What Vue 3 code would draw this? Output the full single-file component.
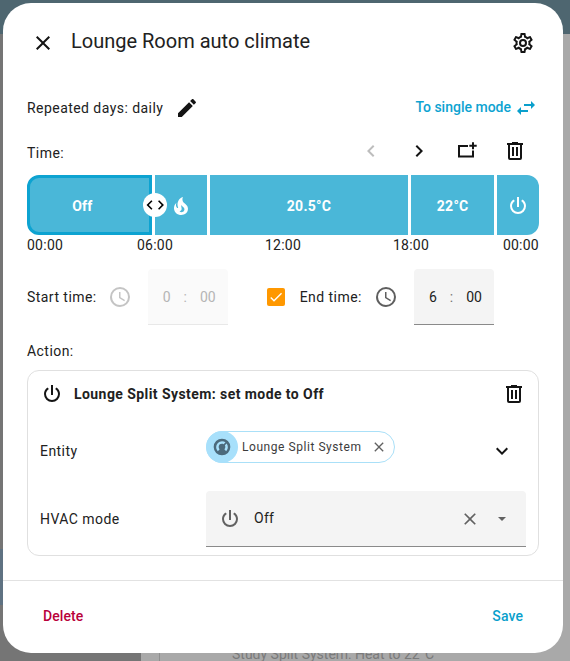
<script setup>
const P = {
  close: 'M19,6.41L17.59,5L12,10.59L6.41,5L5,6.41L10.59,12L5,17.59L6.41,19L12,13.41L17.59,19L19,17.59L13.41,12L19,6.41Z',
  pencil: 'M20.71,7.04C21.1,6.65 21.1,6 20.71,5.63L18.37,3.29C18,2.9 17.35,2.9 16.96,3.29L15.12,5.12L18.87,8.87M3,17.25V21H6.75L17.81,9.93L14.06,6.18L3,17.25Z',
  cog: 'M12,8A4,4 0 0,1 16,12A4,4 0 0,1 12,16A4,4 0 0,1 8,12A4,4 0 0,1 12,8M12,10A2,2 0 0,0 10,12A2,2 0 0,0 12,14A2,2 0 0,0 14,12A2,2 0 0,0 12,10M10,22C9.75,22 9.54,21.82 9.5,21.58L9.13,18.93C8.5,18.68 7.96,18.34 7.44,17.94L4.95,18.95C4.73,19.03 4.46,18.95 4.34,18.73L2.34,15.27C2.21,15.05 2.27,14.78 2.46,14.63L4.57,12.97L4.5,12L4.57,11L2.46,9.37C2.27,9.22 2.21,8.95 2.34,8.73L4.34,5.27C4.46,5.05 4.73,4.96 4.95,5.05L7.44,6.05C7.96,5.66 8.5,5.32 9.13,5.07L9.5,2.42C9.54,2.18 9.75,2 10,2H14C14.25,2 14.46,2.18 14.5,2.42L14.87,5.07C15.5,5.32 16.04,5.66 16.56,6.05L19.05,5.05C19.27,4.96 19.54,5.05 19.66,5.27L21.66,8.73C21.79,8.95 21.73,9.22 21.54,9.37L19.43,11L19.5,12L19.43,13L21.54,14.63C21.73,14.78 21.79,15.05 21.66,15.27L19.66,18.73C19.54,18.95 19.27,19.04 19.05,18.95L16.56,17.95C16.04,18.34 15.5,18.68 14.87,18.93L14.5,21.58C14.46,21.82 14.25,22 14,22H10M11.25,4L10.88,6.61C9.68,6.86 8.62,7.5 7.85,8.39L5.44,7.35L4.69,8.65L6.8,10.2C6.4,11.37 6.4,12.64 6.8,13.8L4.68,15.36L5.43,16.66L7.86,15.62C8.63,16.5 9.68,17.14 10.87,17.38L11.24,20H12.76L13.13,17.39C14.32,17.14 15.37,16.5 16.14,15.62L18.57,16.66L19.32,15.36L17.2,13.81C17.6,12.64 17.6,11.37 17.2,10.2L19.31,8.65L18.56,7.35L16.15,8.39C15.38,7.5 14.32,6.86 13.12,6.62L12.75,4H11.25Z',
  swap: 'M21,9L17,5V8H10V10H17V13M7,11L3,15L7,19V16H14V14H7V11Z',
  left: 'M15.41,16.58L10.83,12L15.41,7.41L14,6L8,12L14,18L15.41,16.58Z',
  right: 'M8.59,16.58L13.17,12L8.59,7.41L10,6L16,12L10,18L8.59,16.58Z',
  down: 'M7.41,8.58L12,13.17L16.59,8.58L18,10L12,16L6,10L7.41,8.58Z',
  trash: 'M9,3V4H4V6H5V19A2,2 0 0,0 7,21H17A2,2 0 0,0 19,19V6H20V4H15V3H9M7,6H17V19H7V6M9,8V17H11V8H9M13,8V17H15V8H13Z',
  power: 'M16.56,5.44L15.11,6.89C16.84,7.94 18,9.83 18,12A6,6 0 0,1 12,18A6,6 0 0,1 6,12C6,9.83 7.16,7.94 8.88,6.88L7.44,5.44C5.36,6.88 4,9.28 4,12A8,8 0 0,0 12,20A8,8 0 0,0 20,12C20,9.28 18.64,6.88 16.56,5.44M13,3H11V13H13',
  clock: 'M12,20A8,8 0 0,0 20,12A8,8 0 0,0 12,4A8,8 0 0,0 4,12A8,8 0 0,0 12,20M12,2A10,10 0 0,1 22,12A10,10 0 0,1 12,22C6.47,22 2,17.5 2,12A10,10 0 0,1 12,2M12.5,7V12.25L17,14.92L16.25,16.15L11,13V7H12.5Z',
  fire: 'M17.66 11.2C17.43 10.9 17.15 10.64 16.89 10.38C16.22 9.78 15.46 9.35 14.82 8.72C13.33 7.26 13 4.85 13.95 3C13 3.23 12.17 3.75 11.46 4.32C8.87 6.4 7.85 10.07 9.07 13.22C9.11 13.32 9.15 13.42 9.15 13.55C9.15 13.77 9 13.97 8.8 14.05C8.57 14.15 8.33 14.09 8.14 13.93C8.08 13.88 8.04 13.83 8 13.76C6.87 12.33 6.69 10.28 7.45 8.64C5.78 10 4.87 12.3 5 14.47C5.06 14.97 5.12 15.47 5.29 15.97C5.43 16.57 5.7 17.17 6 17.7C7.08 19.43 8.95 20.67 10.96 20.92C13.1 21.19 15.39 20.8 17.03 19.32C18.86 17.66 19.5 15 18.56 12.72L18.43 12.46C18.22 12 17.66 11.2 17.66 11.2M14.5 17.5C14.22 17.74 13.76 18 13.4 18.1C12.28 18.5 11.16 17.94 10.5 17.28C11.69 17 12.4 16.12 12.61 15.23C12.78 14.43 12.46 13.77 12.33 13C12.21 12.26 12.23 11.63 12.5 10.94C12.69 11.32 12.89 11.7 13.13 12C13.9 13 15.11 13.44 15.37 14.8C15.41 14.94 15.43 15.08 15.43 15.23C15.46 16.05 15.1 16.95 14.5 17.5H14.5Z',
  addbox: 'M3,6H13V8H5V16.5H17V11.5H19V18.5H3V6ZM17,3.2H19V5.7H21.7V7.7H19V10.2H17V7.7H14.3V5.7H17V3.2Z',
  thermostat: 'M16.95,16.95L14.83,14.83C15.55,14.1 16,13.1 16,12C16,11.26 15.79,10.57 15.43,10L17.6,7.81C18.5,9 19,10.43 19,12C19,13.93 18.22,15.68 16.95,16.95M12,5C13.57,5 15,5.5 16.19,6.4L14,8.56C13.43,8.21 12.74,8 12,8A4,4 0 0,0 8,12C8,13.1 8.45,14.1 9.17,14.83L7.05,16.95C5.78,15.68 5,13.93 5,12A7,7 0 0,1 12,5M12,2A10,10 0 0,0 2,12A10,10 0 0,0 12,22A10,10 0 0,0 22,12A10,10 0 0,0 12,2Z',
  check: 'M9,16.17L4.83,12L3.41,13.41L9,19L21,7L19.59,5.59L9,16.17Z',
}
const segments = [
  { key: 'off', w: 125, text: 'Off', cls: 'active first' },
  { key: 'fire', w: 52, icon: 'fire' },
  { key: 't1', w: 199, text: '20.5°C' },
  { key: 't2', w: 83, text: '22°C' },
  { key: 'pw', w: 42, icon: 'power', cls: 'last' },
]
const ticks = ['00:00', '06:00', '12:00', '18:00', '00:00']
</script>

<template>
  <div class="page">
    <div class="backdrop">
      <div class="back-top"></div>
      <div class="back-left"></div>
      <div class="back-blue"></div>
      <div class="back-line"></div>
      <div class="back-bottom"><span>Study Split System: Heat to 22°C</span></div>
    </div>
    <div class="dialog">
      <header class="head">
        <svg class="ic close" viewBox="0 0 24 24"><path :d="P.close" /></svg>
        <h1>Lounge Room auto climate</h1>
        <svg class="ic cog" viewBox="0 0 24 24"><path :d="P.cog" /></svg>
      </header>

      <div class="repeat">
        <span class="label">Repeated days: daily</span>
        <svg class="ic pencil" viewBox="0 0 24 24"><path :d="P.pencil" /></svg>
        <a class="mode">To single mode</a>
        <svg class="ic swap" viewBox="0 0 24 24"><path :d="P.swap" /></svg>
      </div>

      <div class="timerow">
        <span class="label time-l">Time:</span>
        <div class="tools">
          <svg class="ic faint" viewBox="0 0 24 24"><path :d="P.left" /></svg>
          <svg class="ic" viewBox="0 0 24 24"><path :d="P.right" /></svg>
          <svg class="ic" viewBox="0 0 24 24"><path :d="P.addbox" /></svg>
          <svg class="ic" viewBox="0 0 24 24"><path :d="P.trash" /></svg>
        </div>
      </div>

      <div class="bar">
        <div v-for="s in segments" :key="s.key" class="seg" :class="s.cls" :style="{ width: s.w + 'px' }">
          <template v-if="s.text">{{ s.text }}</template>
          <svg v-else class="ic seg-ic" viewBox="0 0 24 24"><path :d="P[s.icon]" /></svg>
        </div>
        <div class="handle">
          <svg viewBox="0 0 24 24">
            <path :d="P.left" transform="translate(6.5 12) scale(.8) translate(-11.7 -12)" />
            <path :d="P.right" transform="translate(18 12) scale(.8) translate(-12.3 -12)" />
          </svg>
        </div>
      </div>
      <div class="ticks"><span v-for="(t, i) in ticks" :key="i">{{ t }}</span></div>

      <div class="times">
        <span class="label">Start time:</span>
        <svg class="ic clk dim" viewBox="0 0 24 24"><path :d="P.clock" /></svg>
        <div class="timebox off"><span>0</span><i>:</i><span>00</span></div>
        <div class="chk"><svg viewBox="0 0 24 24"><path :d="P.check" /></svg></div>
        <span class="label end-l">End time:</span>
        <svg class="ic clk" viewBox="0 0 24 24"><path :d="P.clock" /></svg>
        <div class="timebox"><span>6</span><i>:</i><span>00</span></div>
      </div>

      <div class="label action-l">Action:</div>
      <section class="card">
        <div class="card-head">
          <svg class="ic" viewBox="0 0 24 24"><path :d="P.power" /></svg>
          <strong>Lounge Split System: set mode to Off</strong>
          <svg class="ic" viewBox="0 0 24 24"><path :d="P.trash" /></svg>
        </div>
        <div class="entity">
          <span class="field-l">Entity</span>
          <div class="chip">
            <span class="chip-ic"><svg viewBox="0 0 24 24"><path :d="P.thermostat" fill-rule="evenodd" /></svg></span>
            <span class="chip-t">Lounge Split System</span>
            <svg class="chip-x" viewBox="0 0 24 24"><path :d="P.close" /></svg>
          </div>
          <svg class="ic ent-down" viewBox="0 0 24 24"><path :d="P.down" /></svg>
        </div>
        <div class="hvac">
          <span class="field-l">HVAC mode</span>
          <div class="select">
            <svg class="ic grey" viewBox="0 0 24 24"><path :d="P.power" /></svg>
            <span class="sel-t">Off</span>
            <svg class="ic grey sel-x" viewBox="0 0 24 24"><path :d="P.close" /></svg>
            <span class="caret"></span>
          </div>
        </div>
      </section>

      <footer class="foot">
        <a class="del">Delete</a>
        <a class="save">Save</a>
      </footer>
    </div>
  </div>
</template>

<style>
html, body { margin: 0; background: #a9a9a9; }
</style>

<style scoped>
.page { position: relative; width: 570px; height: 661px; overflow: hidden; font-family: Roboto, "Liberation Sans", sans-serif; color: #212121; }
.backdrop { position: absolute; inset: 0; background: #a9a9a9; }
.back-top { position: absolute; left: 0; right: 0; top: 0; height: 34px; background: #4e6670; }
.back-left { position: absolute; left: 0; top: 34px; bottom: 0; width: 141px; background: #757575; }
.back-blue { position: absolute; left: 0; top: 549px; height: 56px; width: 141px; background: #5f7282; }
.back-line { position: absolute; left: 159px; top: 640px; bottom: 0; width: 1px; background: #8f8f8f; }
.back-bottom { position: absolute; left: 232px; top: 646px; font-size: 14px; color: #7a7a7a; }
.dialog { position: absolute; left: 3px; top: 3px; width: 560px; height: 650px; box-sizing: border-box; padding: 0 24px; background: #fff; border-radius: 28px; display: flex; flex-direction: column; }
.ic { width: 24px; height: 24px; fill: #141414; flex: none; display: block; }
.head { display: flex; align-items: center; height: 80px; margin: 0 4px; }
.close { margin-right: 16px; }
.head h1 { margin: 0; flex: 1; font-size: 20px; font-weight: 400; color: #212121; position: relative; top: -2px; }
.label { font-size: 14px; color: #212121; letter-spacing: 0.45px; }
.repeat { display: flex; align-items: center; height: 24px; margin-top: 13px; }
.pencil { margin-left: 12px; }
.mode { margin-left: auto; font-size: 14px; font-weight: 500; color: #0da3d1; margin-right: 3px; position: relative; top: -1px; }
.swap { fill: #0a9fcc; margin-right: 1px; }
.timerow { display: flex; align-items: center; justify-content: space-between; height: 24px; margin-top: 19px; }
.time-l { padding-top: 4px; }
.tools { display: flex; gap: 24px; margin-right: 12px; }
.tools .faint { fill: #bdbdbd; }
.bar { position: relative; display: flex; gap: 3px; height: 60px; margin-top: 12px; }
.seg { background: #4ab7d8; color: #fff; font-size: 14px; font-weight: 700; letter-spacing: 0.25px; display: flex; align-items: center; justify-content: center; box-sizing: border-box; padding-top: 1px; }
.seg.first { border-radius: 12px 0 0 12px; padding-right: 14px; }
.seg.last { border-radius: 0 12px 12px 0; }
.seg.active { border: 3px solid #0da3d1; }
.seg-ic { fill: #fff; }
.handle { position: absolute; left: 116px; top: 18px; width: 24px; height: 24px; background: #fff; border-radius: 50%; z-index: 2; }
.handle svg { display: block; width: 24px; height: 24px; fill: #000; }
.ticks { display: grid; grid-template-columns: 64px 128px 128px 128px 64px; justify-items: center; font-size: 14px; letter-spacing: 0.25px; line-height: 16px; margin-top: 2px; }
.ticks span:first-child { justify-self: start; }
.ticks span:last-child { justify-self: end; }
.times { display: flex; align-items: center; height: 56px; margin-top: 16px; }
.clk { margin-left: 12px; fill: #5f5f5f; }
.clk.dim { margin-left: 11px; fill: #c4c4c4; }
.timebox { width: 80px; height: 56px; box-sizing: border-box; margin-left: 16px; padding-left: 15px; background: #f4f4f4; border-bottom: 1px solid #8a8a8a; border-radius: 4px 4px 0 0; display: flex; align-items: center; gap: 13px; font-size: 14px; color: #212121; }
.timebox i { font-style: normal; color: #757575; }
.timebox.off { background: #fafafa; border-bottom-color: #e8e8e8; color: #b5b5b5; }
.timebox.off i { color: #b5b5b5; }
.chk { width: 18px; height: 18px; margin-left: 39px; background: #ff9800; border-radius: 2px; display: flex; align-items: center; justify-content: center; }
.chk svg { width: 16px; height: 16px; fill: #fff; }
.end-l { margin-left: 15px; }
.action-l { margin-top: 18px; line-height: 16px; }
.card { margin-top: 11px; border: 1px solid #e0e0e0; border-radius: 12px; height: 186px; box-sizing: border-box; padding: 0 12px; }
.card-head { display: flex; align-items: center; height: 46px; }
.card-head strong { flex: 1; margin-left: 10px; font-size: 14px; font-weight: 700; color: #212121; letter-spacing: 0.43px; }
.entity { display: flex; align-items: center; height: 40px; margin-top: 14px; }
.field-l { width: 166px; font-size: 14px; letter-spacing: 0.45px; color: #212121; }
.chip { display: flex; align-items: center; height: 32px; width: 189px; margin-bottom: 8px; box-sizing: border-box; border: 1px solid #aae0f8; border-radius: 16px; }
.chip-ic { width: 32px; height: 32px; margin: -1px 0 -1px -1px; border-radius: 50%; background: #a8e0fb; display: flex; align-items: center; justify-content: center; flex: none; }
.chip-ic svg { width: 20px; height: 20px; fill: #4c6a7c; }
.chip-t { margin-left: 4px; font-size: 12px; letter-spacing: 0.55px; color: #3c3c3c; white-space: nowrap; }
.chip-x { width: 16px; height: 16px; fill: #616161; margin-left: auto; margin-right: 7px; flex: none; }
.ent-down { margin-left: 95px; }
.hvac { display: flex; align-items: center; height: 56px; margin-top: 20px; }
.select { display: flex; align-items: center; flex: 1; height: 56px; box-sizing: border-box; padding: 0 20px 0 12px; background: #f4f4f4; border-bottom: 1px solid #8a8a8a; border-radius: 4px 4px 0 0; }
.grey { fill: #616161; }
.sel-t { flex: 1; margin-left: 12px; font-size: 14px; color: #212121; letter-spacing: 0.25px; position: relative; top: -1px; }
.sel-x { width: 20px; height: 20px; }
.caret { width: 0; height: 0; margin-left: 18px; border-left: 4px solid transparent; border-right: 4px solid transparent; border-top: 4px solid #616161; }
.foot { margin: auto -24px 0; height: 73px; box-sizing: border-box; padding: 0 40px 3px; border-top: 1px solid #e2e2e2; display: flex; align-items: center; justify-content: space-between; font-size: 14px; font-weight: 500; letter-spacing: 0.1px; }
.del { color: #b9003a; }
.save { color: #0a9fcc; }
</style>
